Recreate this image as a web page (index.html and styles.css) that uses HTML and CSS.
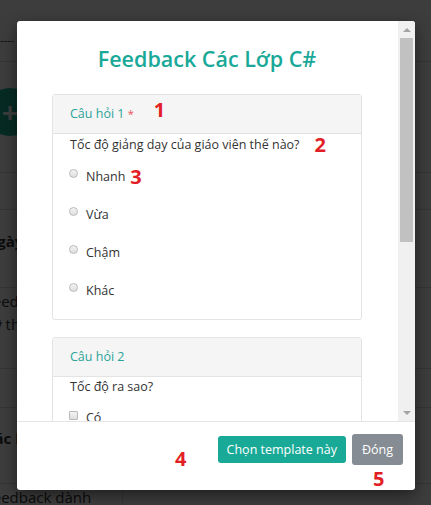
FILE: index.html
```html
<!DOCTYPE html>
<html lang="vi">
<head>
<meta charset="utf-8">
<title>Feedback Các Lớp C#</title>
<link rel="stylesheet" href="styles.css">
</head>
<body>
<div class="page">
  <div class="bg-row bg-head"><span class="bg-small">---- --- ----</span></div>
  <div class="bg-row bg-add"><span class="add-btn">+</span></div>
  <div class="bg-row bg-sp1"></div>
  <div class="bg-row bg-name"><b>Ngày tạo</b></div>
  <div class="bg-row bg-desc">Feedback dành cho<br>Kỹ thuật</div>
  <div class="bg-row bg-sp2"></div>
  <div class="bg-row bg-name2"><b>Các lớp</b></div>
  <div class="bg-row bg-last"><span class="bg-cell">Feedback dành</span><span class="bg-cell2"></span></div>
</div>
<div class="backdrop"></div>

<div class="modal">
  <div class="modal-main">
    <div class="modal-scroll">
      <h2 class="modal-title">Feedback Các Lớp C#</h2>

      <div class="panel">
        <div class="panel-heading">Câu hỏi 1 <span class="req">*</span><span class="mark mark-1">1</span></div>
        <div class="panel-body">
          <div class="question">Tốc độ giảng dạy của giáo viên thế nào?<span class="mark mark-2">2</span></div>
          <div class="options">
            <label class="opt"><span class="radio"></span>Nhanh<span class="mark mark-3">3</span></label>
            <label class="opt"><span class="radio"></span>Vừa</label>
            <label class="opt"><span class="radio"></span>Chậm</label>
            <label class="opt"><span class="radio"></span>Khác</label>
          </div>
        </div>
      </div>

      <div class="panel panel-2">
        <div class="panel-heading">Câu hỏi 2</div>
        <div class="panel-body">
          <div class="question">Tốc độ ra sao?</div>
          <div class="options">
            <label class="opt"><span class="checkbox"></span>Có</label>
            <label class="opt"><span class="checkbox"></span>Không</label>
          </div>
        </div>
      </div>
    </div>
    <div class="scrollbar">
      <div class="sb-btn"><span class="arrow-up"></span></div>
      <div class="sb-thumb"></div>
      <div class="sb-space"></div>
      <div class="sb-btn"><span class="arrow-down"></span></div>
    </div>
  </div>
  <div class="modal-footer">
    <div class="actions">
      <button class="btn btn-primary">Chọn template này</button>
      <button class="btn btn-default">Đóng</button>
    </div>
    <span class="mark mark-4">4</span>
    <span class="mark mark-5">5</span>
  </div>
</div>
</body>
</html>
```

FILE: styles.css
```css
* { box-sizing: border-box; }
html, body { margin: 0; padding: 0; }
body {
  width: 431px;
  height: 505px;
  overflow: hidden;
  position: relative;
  background: #fff;
  color: #333;
  font-family: "Open Sans", "Noto Sans", sans-serif;
}

/* background page */
.page { margin-left: -15px; font-size: 15px; color: #333; }
.bg-row { border-top: 1px solid #ddd; white-space: nowrap; }
.bg-head { height: 61px; border-top: 0; padding: 32px 0 0 15px; font-size: 11px; }
.bg-add { height: 111px; padding: 26px 0 0 1px; }
.add-btn {
  display: flex; align-items: center; justify-content: center;
  width: 48px; height: 48px; border-radius: 50%;
  background: #1ab394; color: #fff; font-size: 28px; font-weight: 700;
}
.bg-sp1 { height: 37px; }
.bg-name { height: 78px; padding-top: 21px; line-height: 20px; }
.bg-desc { height: 81px; padding-top: 2px; line-height: 23px; }
.bg-sp2 { height: 39px; }
.bg-name2 { height: 76px; padding-top: 20px; line-height: 20px; }
.bg-last { height: 40px; display: flex; }
.bg-cell { width: 138px; padding-top: 3px; line-height: 20px; border-right: 1px solid #ddd; }

.backdrop { position: absolute; inset: 0; background: rgba(0, 0, 0, 0.76); }

/* modal */
.modal {
  position: absolute;
  left: 17px;
  top: 21px;
  width: 398px;
  height: 469px;
  background: #fff;
  border-radius: 3px;
  display: flex;
  flex-direction: column;
  overflow: hidden;
  box-shadow: 0 5px 15px rgba(0, 0, 0, 0.5);
}
.modal-main { display: flex; height: 400px; }
.modal-scroll { flex: 1; overflow: hidden; padding: 22px 36px 0 35px; }
.modal-title {
  margin: 0 0 19px;
  text-align: center;
  font-size: 21.5px;
  line-height: 32px;
  font-weight: 600;
  color: #1aa898;
}

.panel { border: 1px solid #e3e3e3; border-radius: 3px; font-size: 12.5px; }
.panel-2 { margin-top: 17px; }
.panel-heading {
  height: 39px;
  line-height: 38px;
  padding: 0 17px;
  background: #f5f5f5;
  border-bottom: 1px solid #e3e3e3;
  color: #2aa497;
  white-space: nowrap;
}
.req { color: #e9505a; font-size: 11px; }
.panel-body { padding: 1px 17px 18px; }
.question { line-height: 18px; white-space: nowrap; }
.options { display: flex; flex-direction: column; gap: 18px; margin-top: 12px; }
.opt { display: flex; align-items: flex-start; line-height: 20px; height: 20px; }
.radio, .checkbox {
  width: 9px; height: 9px; margin: 2px 8px 0 -1px; flex: none;
  border: 1px solid #b9b9b9;
  background: linear-gradient(#f4f4f4, #dedede);
}
.radio { border-radius: 50%; }
.checkbox { border-radius: 1px; margin-top: 3px; }

.mark {
  color: #e21f26;
  font-weight: 700;
  font-size: 20px;
  line-height: 20px;
}
.mark-1 { margin-left: 20px; vertical-align: 1px; }
.mark-2 { margin-left: 15px; vertical-align: -3px; }
.mark-3 { margin-left: 5px; }
.mark-4, .mark-5 { position: absolute; }
.mark-4 { left: 158px; top: 27px; }
.mark-5 { left: 356px; top: 47px; }

/* fake scrollbar */
.scrollbar { width: 17px; background: #f0f0f0; display: flex; flex-direction: column; }
.sb-btn { height: 17px; display: flex; align-items: center; justify-content: center; }
.arrow-up, .arrow-down { width: 0; height: 0; border-left: 4px solid transparent; border-right: 4px solid transparent; }
.arrow-up { border-bottom: 4px solid #a3a3a3; }
.arrow-down { border-top: 4px solid #a3a3a3; }
.sb-thumb { height: 204px; margin: 0 2px; background: #c1c1c1; }
.sb-space { flex: 1; }

/* footer */
.modal-footer {
  position: relative;
  height: 69px;
  border-top: 1px solid #e5e5e5;
  padding: 12px 12px 0;
  display: flex;
  justify-content: flex-end;
  align-items: flex-start;
}
.actions { display: flex; align-items: center; gap: 6px; height: 31px; }
.btn {
  font-family: "Open Sans", "Noto Sans", sans-serif;
  font-size: 12.5px;
  color: #fff;
  border: 0;
  border-radius: 3px;
  white-space: nowrap;
}
.btn-primary { background: #18aa97; height: 27px; padding: 0 9px; }
.btn-default { background: #858c93; height: 31px; padding: 0 10px; }
```
